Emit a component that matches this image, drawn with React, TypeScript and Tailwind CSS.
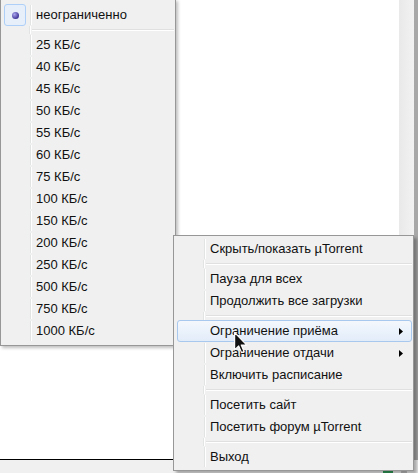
import { ReactNode } from 'react';

type Entry = { kind: 'item'; label: string; arrow?: boolean; hot?: boolean; radio?: boolean } | { kind: 'sep' };

const speeds = ['25', '40', '45', '50', '55', '60', '75', '100', '150', '200', '250', '500', '750', '1000'];

const speedMenu: Entry[] = [
  { kind: 'item', label: 'неограниченно', radio: true },
  { kind: 'sep' },
  ...speeds.map((s) => ({ kind: 'item' as const, label: `${s} КБ/с` })),
];

const trayMenu: Entry[] = [
  { kind: 'item', label: 'Скрыть/показать µTorrent' },
  { kind: 'sep' },
  { kind: 'item', label: 'Пауза для всех' },
  { kind: 'item', label: 'Продолжить все загрузки' },
  { kind: 'sep' },
  { kind: 'item', label: 'Ограничение приёма', arrow: true, hot: true },
  { kind: 'item', label: 'Ограничение отдачи', arrow: true },
  { kind: 'item', label: 'Включить расписание' },
  { kind: 'sep' },
  { kind: 'item', label: 'Посетить сайт' },
  { kind: 'item', label: 'Посетить форум µTorrent' },
  { kind: 'sep' },
  { kind: 'item', label: 'Выход' },
];

// Left column that holds check marks; its right edge is the etched gutter line
function Gutter({ children, hidden }: { children?: ReactNode; hidden?: boolean }) {
  return (
    <div
      className={`flex h-full w-[27px] shrink-0 items-center ${
        hidden ? '' : 'border-r border-r-[#e2e3e3] shadow-[1px_0_0_#ffffff]'
      }`}
    >
      {children}
    </div>
  );
}

function RadioMark() {
  return (
    <div className="flex h-[22px] w-[22px] items-center justify-center rounded-[3px] border border-[#aecff7] bg-[#e6effa]">
      <span className="h-[7px] w-[7px] rounded-full bg-[radial-gradient(circle_at_35%_35%,#a9a6ee,#3a2f93_75%)]" />
    </div>
  );
}

function MenuRows({ entries }: { entries: Entry[] }) {
  return (
    <>
      {entries.map((e, i) =>
        e.kind === 'sep' ? (
          <div key={i} className="flex h-[8px] items-stretch">
            <Gutter />
            <div className="flex flex-1 flex-col justify-center pl-[2px]">
              <div className="h-px bg-[#e0e0e0]" />
              <div className="h-px bg-white" />
            </div>
          </div>
        ) : (
          <div
            key={i}
            className={`flex h-[22px] items-center rounded-[3px] border ${
              e.hot
                ? 'border-[#a8c8ee] bg-gradient-to-b from-[#f4f8fd] to-[#e2ecf9]'
                : 'border-transparent'
            }`}
          >
            <Gutter hidden={e.hot}>{e.radio && <RadioMark />}</Gutter>
            <span className="flex-1 pl-[5px] whitespace-nowrap">{e.label}</span>
            {e.arrow && (
              <svg width="4" height="7" viewBox="0 0 4 7" className="mr-[8px]">
                <path d="M0 0 L4 3.5 L0 7 Z" fill="#000" />
              </svg>
            )}
          </div>
        ),
      )}
    </>
  );
}

function Cursor() {
  return (
    <svg width="14" height="22" viewBox="0 0 12 19" className="absolute left-[234px] top-[332px]">
      <path
        d="M0.5 0.5 L0.5 15.5 L4 12 L6.5 17.8 L8.6 16.9 L6.2 11.3 L11 11.3 Z"
        fill="#111"
        stroke="#fff"
        strokeWidth="1"
        strokeLinejoin="round"
      />
    </svg>
  );
}

export default function App() {
  return (
    <div className="relative h-[473px] w-[418px] overflow-hidden bg-[#f0f0f0] font-['Liberation_Sans',Arial,sans-serif] text-[13px] text-[#111]">
      {/* window behind the menus */}
      <div className="flex h-[460px]">
        <div className="h-full w-[399px] border-b border-b-black bg-white" />
        <div className="h-full w-[15px] bg-gradient-to-r from-[#e9e9e9] to-[#f2f2f2]" />
        <div className="h-full w-[4px] bg-[#a8a8a8]" />
      </div>
      <div className="flex items-end pl-[383px] pt-[9px]">
        <div className="h-[4px] w-[10px] rounded-t-[2px] bg-[#2e9a56]" />
        <div className="ml-[8px] h-[3px] w-[6px] rounded-t-[2px] bg-[#bdbdbd]" />
      </div>

      {/* speed submenu */}
      <div className="absolute left-0 top-[-1px] w-[176px] border border-[#979797] bg-[#f0f0f0] pb-[3px] pl-[2px] pr-[1px] pt-[4px] shadow-[2px_2px_3px_rgba(0,0,0,0.25)]">
        <MenuRows entries={speedMenu} />
      </div>

      {/* tray context menu */}
      <div className="absolute left-[173px] top-[235px] w-[241px] border border-[#979797] bg-[#f0f0f0] pb-[2px] pl-[3px] pr-[1px] pt-[2px] shadow-[3px_3px_3px_rgba(0,0,0,0.3)]">
        <MenuRows entries={trayMenu} />
      </div>

      <Cursor />
    </div>
  );
}
